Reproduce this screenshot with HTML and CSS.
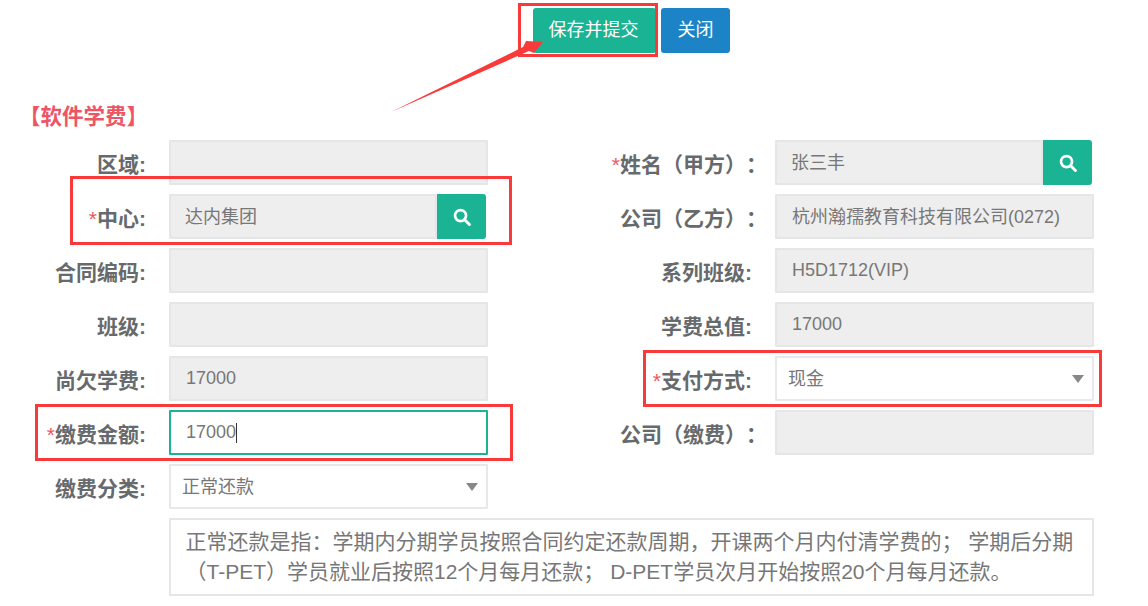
FILE: index.html
```html
<!DOCTYPE html>
<html lang="zh-CN">
<head>
<meta charset="utf-8">
<title>软件学费</title>
<link rel="stylesheet" href="styles.css">
</head>
<body>
<div class="page">
  <div class="toolbar">
    <button class="btn btn-save">保存并提交</button>
    <button class="btn btn-close">关闭</button>
  </div>
  <h2 class="section-title">【软件学费】</h2>
  <div class="form">
    <div class="field">
      <span class="label">区域:</span>
      <div class="control readonly"></div>
    </div>
    <div class="field">
      <span class="label"><i class="req">*</i>姓名（甲方）<span class="wide-colon">：</span></span>
      <div class="group">
        <div class="control readonly">张三丰</div>
        <button class="search"><svg viewBox="0 0 16 16" width="18" height="18"><circle cx="6.7" cy="6.7" r="4.9" fill="none" stroke="#fff" stroke-width="2.4"/><path d="M10.4 10.4L14.6 14.6" stroke="#fff" stroke-width="2.6" stroke-linecap="round"/></svg></button>
      </div>
    </div>
    <div class="field">
      <span class="label"><i class="req">*</i>中心:</span>
      <div class="group">
        <div class="control readonly">达内集团</div>
        <button class="search"><svg viewBox="0 0 16 16" width="18" height="18"><circle cx="6.7" cy="6.7" r="4.9" fill="none" stroke="#fff" stroke-width="2.4"/><path d="M10.4 10.4L14.6 14.6" stroke="#fff" stroke-width="2.6" stroke-linecap="round"/></svg></button>
      </div>
    </div>
    <div class="field">
      <span class="label">公司（乙方）<span class="wide-colon">：</span></span>
      <div class="control readonly company">杭州瀚孺教育科技有限公司(0272)</div>
    </div>
    <div class="field">
      <span class="label">合同编码:</span>
      <div class="control readonly"></div>
    </div>
    <div class="field">
      <span class="label">系列班级:</span>
      <div class="control readonly latin">H5D1712(VIP)</div>
    </div>
    <div class="field">
      <span class="label">班级:</span>
      <div class="control readonly"></div>
    </div>
    <div class="field">
      <span class="label">学费总值:</span>
      <div class="control readonly latin">17000</div>
    </div>
    <div class="field">
      <span class="label">尚欠学费:</span>
      <div class="control readonly latin">17000</div>
    </div>
    <div class="field">
      <span class="label"><i class="req">*</i>支付方式:</span>
      <div class="control select">现金<span class="caret"></span></div>
    </div>
    <div class="field">
      <span class="label"><i class="req">*</i>缴费金额:</span>
      <div class="control focused latin">17000<span class="cursor"></span></div>
    </div>
    <div class="field">
      <span class="label">公司（缴费）<span class="wide-colon">：</span></span>
      <div class="control readonly"></div>
    </div>
    <div class="field">
      <span class="label">缴费分类:</span>
      <div class="control select">正常还款<span class="caret"></span></div>
    </div>
    <div class="field"></div>
    <div class="note">正常还款是指：学期内分期学员按照合同约定还款周期，开课两个月内付清学费的； 学期后分期（T-PET）学员就业后按照12个月每月还款； D-PET学员次月开始按照20个月每月还款。</div>
  </div>

  <div class="mark mark-save"></div>
  <div class="mark mark-center"></div>
  <div class="mark mark-amount"></div>
  <div class="mark mark-pay"></div>
  <svg class="arrow" width="1148" height="606" viewBox="0 0 1148 606"><polygon points="391,112 523,47 526,41 543,42 534,53 529,51" fill="#f83a3a"/></svg>
</div>
</body>
</html>
```

FILE: styles.css
```css
* { box-sizing: border-box; }
html, body { margin: 0; background: #fff; }
body {
  font-family: "Liberation Sans", "Noto Sans CJK SC", sans-serif;
  font-size: 18px;
  color: #676a6c;
}
.page {
  position: relative;
  width: 1148px;
  height: 606px;
  overflow: hidden;
}
.toolbar {
  display: flex;
  gap: 5px;
  padding: 8px 0 0 533px;
}
.btn {
  height: 45px;
  border: 0;
  border-radius: 3px;
  color: #fff;
  font: inherit;
  padding: 0 0 6px;
}
.btn-save { width: 123px; padding-right: 2px; background: #1ab394; }
.btn-close { width: 69px; background: #1c84c6; }
.section-title {
  margin: 0;
  padding: 49px 0 0 19px;
  height: 87px;
  font-size: 21.5px;
  line-height: 30px;
  font-weight: 700;
  color: #ed5565;
}
.form {
  display: grid;
  grid-template-columns: 488px 606px;
  grid-auto-rows: 45px;
  row-gap: 9px;
}
.field {
  display: flex;
  justify-content: flex-end;
  gap: 23px;
}
.label {
  align-self: center;
  padding-top: 5px;
  font-size: 21px;
  line-height: 30px;
  font-weight: 700;
  white-space: nowrap;
  text-spacing-trim: space-all;
}
.wide-colon { margin-right: -15px; }
.req {
  font-style: normal;
  font-weight: 400;
  color: #ed5565;
}
.control {
  position: relative;
  flex: 0 0 319px;
  display: flex;
  align-items: center;
  height: 45px;
  padding: 0 15px 3px 14px;
  border: 2px solid #e5e6e7;
  border-radius: 1px;
  color: #777;
  white-space: nowrap;
}
.latin { padding-left: 15px; padding-bottom: 0; }
.company { padding-left: 15px; }
.readonly { background: #eee; }
.focused { border-color: #1ab394; background: #fff; }
.select { padding-left: 11px; border-color: #e5e9ec; background: #fff; }
.caret {
  position: absolute;
  right: 8px;
  top: 17px;
  border-style: solid;
  border-width: 8px 6px 0;
  border-color: #888 transparent transparent;
}
.cursor {
  width: 1px;
  height: 20px;
  background: #333;
}
.group {
  display: flex;
  width: 319px;
  padding-right: 2px;
}
.group .control { flex: 1 1 auto; min-width: 0; }
.search {
  flex: 0 0 49px;
  display: flex;
  align-items: center;
  justify-content: center;
  height: 45px;
  padding: 0;
  border: 0;
  border-radius: 0 3px 3px 0;
  background: #1ab394;
}
.note {
  grid-column: 1 / -1;
  height: 78px;
  margin-left: 169px;
  padding: 7px 15px 6px 14.5px;
  border: 2px solid #e5e6e7;
  font-size: 21px;
  line-height: 30px;
  color: #777;
}
.mark {
  position: absolute;
  border: 3px solid #f83a3a;
}
.mark-save { left: 518px; top: 3px; width: 140px; height: 54px; }
.mark-center { left: 70px; top: 176px; width: 442px; height: 69px; }
.mark-amount { left: 35px; top: 404px; width: 478px; height: 57px; }
.mark-pay { left: 643px; top: 350px; width: 459px; height: 57px; }
.arrow { position: absolute; left: 0; top: 0; pointer-events: none; }
```
